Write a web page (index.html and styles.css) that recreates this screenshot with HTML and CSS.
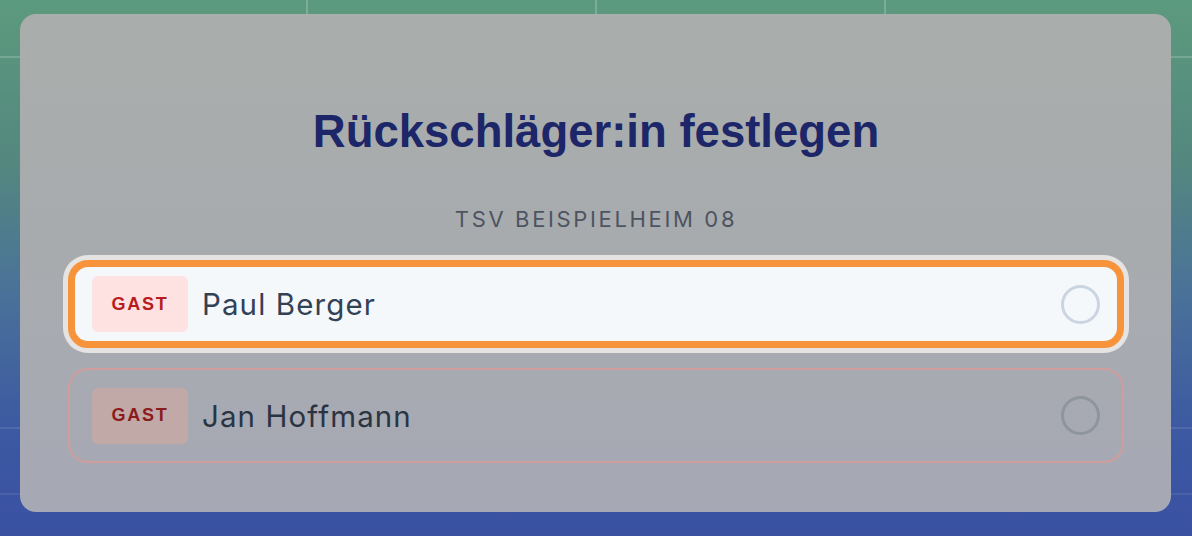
FILE: index.html
```html
<!DOCTYPE html>
<html lang="de">
<head>
<meta charset="utf-8">
<title>Rückschläger:in festlegen</title>
<link rel="stylesheet" href="styles.css">
</head>
<body>
<div class="stage">
  <div class="modal">
    <h1 class="title">Rückschläger:in festlegen</h1>
    <div class="team">TSV BEISPIELHEIM 08</div>
    <div class="list">
      <div class="row selected">
        <span class="badge">GAST</span>
        <span class="name">Paul Berger</span>
        <span class="radio"></span>
      </div>
      <div class="row">
        <span class="badge">GAST</span>
        <span class="name">Jan Hoffmann</span>
        <span class="radio"></span>
      </div>
    </div>
  </div>
</div>
</body>
</html>
```
FILE: styles.css
```css
html, body {
  margin: 0;
  padding: 0;
}
body {
  width: 1192px;
  height: 536px;
  overflow: hidden;
  font-family: Inter, "Liberation Sans", sans-serif;
}
.stage {
  width: 1192px;
  height: 536px;
  box-sizing: border-box;
  padding: 14px 21px 24px 20px;
  background:
    linear-gradient(90deg, transparent 306px, rgba(255,255,255,0.2) 306px, rgba(255,255,255,0.2) 308px, transparent 308px,
      transparent 595px, rgba(255,255,255,0.2) 595px, rgba(255,255,255,0.2) 597px, transparent 597px,
      transparent 884px, rgba(255,255,255,0.2) 884px, rgba(255,255,255,0.2) 886px, transparent 886px) 0 0 / 1192px 60px no-repeat,
    linear-gradient(180deg, transparent 56px, rgba(255,255,255,0.18) 56px, rgba(255,255,255,0.18) 58px, transparent 58px,
      transparent 427px, rgba(255,255,255,0.1) 427px, rgba(255,255,255,0.1) 429px, transparent 429px,
      transparent 493px, rgba(255,255,255,0.08) 493px, rgba(255,255,255,0.08) 495px, transparent 495px),
    linear-gradient(180deg, #5c9a7e 0%, #54887f 30%, #4a7199 55%, #3c59a2 80%, #3a51a2 100%);
}
.modal {
  height: 498px;
  box-sizing: border-box;
  border-radius: 16px;
  background: linear-gradient(180deg, #a9adab 0%, #a8abae 50%, #a6a9b5 100%);
  padding: 92px 47px 0 48px;
  display: flex;
  flex-direction: column;
}
.title {
  margin: 0;
  text-align: center;
  font-family: "Liberation Sans", Arial, sans-serif;
  font-weight: 700;
  font-size: 45.5px;
  line-height: 52px;
  letter-spacing: 0;
  color: #1c2668;
}
.team {
  margin-top: 47px;
  text-align: center;
  font-size: 22px;
  line-height: 28px;
  letter-spacing: 2.65px;
  color: #4d5461;
}
.list {
  margin-top: 27px;
  display: flex;
  flex-direction: column;
  gap: 20px;
}
.row {
  height: 95px;
  box-sizing: border-box;
  border: 2px solid #cf9d9c;
  border-radius: 20px;
  padding: 0 22px;
  display: flex;
  align-items: center;
}
.row.selected {
  height: 88px;
  border: 7px solid #f7943b;
  background: #f4f8fb;
  padding: 0 17px;
  box-shadow: 0 0 0 5px #e6e4e2;
}
.badge {
  width: 96px;
  height: 56px;
  border-radius: 6px;
  background: #c1a9a8;
  color: #8c1b1c;
  font-family: "Liberation Sans", Arial, sans-serif;
  font-weight: 700;
  font-size: 18px;
  letter-spacing: 1.8px;
  display: flex;
  align-items: center;
  justify-content: center;
  flex: none;
}
.selected .badge {
  background: #fee2e2;
  color: #b91c1c;
}
.name {
  margin-left: 14px;
  font-size: 29.5px;
  letter-spacing: 1.1px;
  color: #2b3442;
  flex: 1;
}
.selected .name {
  color: #334155;
}
.radio {
  width: 39px;
  height: 39px;
  box-sizing: border-box;
  border-radius: 50%;
  border: 3px solid #8f959d;
  flex: none;
}
.selected .radio {
  border-color: #cbd5e1;
}
```
